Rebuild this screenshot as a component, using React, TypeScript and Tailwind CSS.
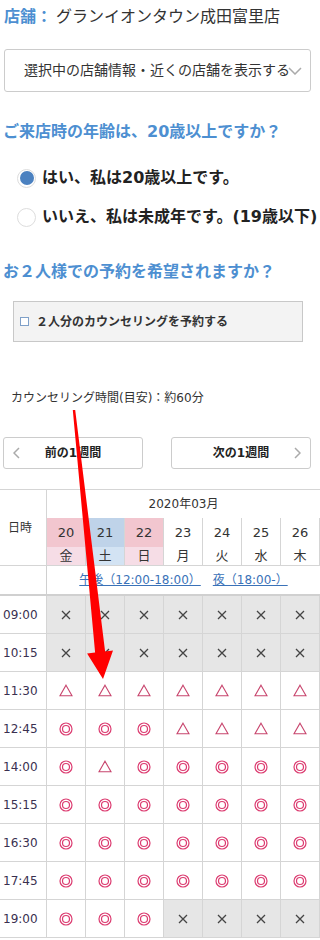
import * as React from "react";

const font = "font-['DejaVu_Sans','Noto_Sans_CJK_JP',sans-serif]";

type Mark = "o" | "t" | "x";

const days = [
  { n: "20", w: "金", top: "bg-[#f2c6cf]", bot: "bg-[#f6dde6]" },
  { n: "21", w: "土", top: "bg-[#bfd3e9]", bot: "bg-[#d3e3f3]" },
  { n: "22", w: "日", top: "bg-[#f2c6cf]", bot: "bg-[#f6dde6]" },
  { n: "23", w: "月", top: "bg-white", bot: "bg-white" },
  { n: "24", w: "火", top: "bg-white", bot: "bg-white" },
  { n: "25", w: "水", top: "bg-white", bot: "bg-white" },
  { n: "26", w: "木", top: "bg-white", bot: "bg-white" },
];

const slots: [string, string][] = [
  ["09:00", "xxxxxxx"],
  ["10:15", "xxxxxxx"],
  ["11:30", "ttttttt"],
  ["12:45", "ooottttt".slice(0, 7)],
  ["14:00", "otooooo"],
  ["15:15", "ooooooo"],
  ["16:30", "ooooooo"],
  ["17:45", "ooooooo"],
  ["19:00", "oooxxxx"],
];

const Symbol: React.FC<{ k: Mark }> = ({ k }) => {
  if (k === "o")
    return (
      <svg width="14" height="14" viewBox="0 0 14 14">
        <circle cx="7" cy="7" r="6" fill="none" stroke="#dc3b70" strokeWidth="1.2" />
        <circle cx="7" cy="7" r="3.5" fill="none" stroke="#dc3b70" strokeWidth="1.2" />
      </svg>
    );
  if (k === "t")
    return (
      <svg width="14" height="13" viewBox="0 0 14 13">
        <polygon points="7,1.2 13,11.8 1,11.8" fill="none" stroke="#c8466e" strokeWidth="1.1" />
      </svg>
    );
  return (
    <svg width="12" height="12" viewBox="0 0 12 12">
      <path d="M2 2 L10 10 M10 2 L2 10" stroke="#444" strokeWidth="1.3" />
    </svg>
  );
};

const App: React.FC = () => {
  return (
    <div className={`relative w-[320px] h-[940px] overflow-hidden bg-white text-[#333] ${font}`}>
      {/* Store name */}
      <div className="h-[34px] flex items-center pl-[4px] text-[16px] leading-[24px]">
        <span className="font-bold text-[#4d8fd1]">店舗：</span>
        <span className="ml-[4px]">グランイオンタウン成田富里店</span>
      </div>

      {/* Store info select */}
      <div className="mt-[15px] ml-[4px] w-[307px] h-[43px] border border-[#ccc] rounded-[3px] flex items-center pl-[19px] text-[14px]">
        <span>選択中の店舗情報・近くの店舗を表示する</span>
        <svg width="14" height="8" viewBox="0 0 14 8" className="-ml-[2px]">
          <polyline points="1,1 7,7 13,1" fill="none" stroke="#aaa" strokeWidth="1.5" />
        </svg>
      </div>

      {/* Age question */}
      <div className="mt-[28px] pl-[3px] text-[16px] leading-[24px] font-bold text-[#4d8fd1] whitespace-nowrap">
        ご来店時の年齢は、20歳以上ですか？
      </div>
      <div className="mt-[22px] h-[24px] flex items-center pl-[17px] whitespace-nowrap">
        <span className="w-[19px] h-[19px] rounded-full border border-[#ddd] flex items-center justify-center">
          <span className="w-[14px] h-[14px] rounded-full bg-[#4b81c0]" />
        </span>
        <span className="ml-[6px] text-[16px] font-bold text-[#222]">はい、私は20歳以上です。</span>
      </div>
      <div className="mt-[15px] h-[24px] flex items-center pl-[17px] whitespace-nowrap">
        <span className="w-[19px] h-[19px] rounded-full border border-[#ddd] bg-white shrink-0" />
        <span className="ml-[6px] text-[16px] font-bold text-[#222]">いいえ、私は未成年です。(19歳以下)</span>
      </div>

      {/* Pair booking */}
      <div className="mt-[31px] pl-[3px] text-[16px] leading-[24px] font-bold text-[#4d8fd1] whitespace-nowrap">
        お２人様での予約を希望されますか？
      </div>
      <div className="mt-[17px] ml-[13px] w-[290px] h-[41px] bg-[#f3f3f3] border border-[#c8c8c8] flex items-center pl-[6px]">
        <span className="w-[9px] h-[9px] border border-[#7fa0c8] bg-white" />
        <span className="ml-[7px] text-[12px] font-bold text-[#333]">２人分のカウンセリングを予約する</span>
      </div>

      <div className="mt-[47px] pl-[11px] text-[12px] leading-[18px] text-[#333]">
        カウンセリング時間(目安)：約60分
      </div>

      {/* Week navigation */}
      <div className="mt-[30px] flex justify-between px-[3px] pr-[9px]">
        <button className="relative w-[140px] h-[32px] border border-[#ccc] rounded-[3px] bg-white flex items-center justify-center text-[12px] font-bold text-[#222]">
          <svg width="7" height="12" viewBox="0 0 7 12" className="absolute left-[9px] top-[9px]">
            <polyline points="6,1 1,6 6,11" fill="none" stroke="#aaa" strokeWidth="1.5" />
          </svg>
          前の1週間
        </button>
        <button className="relative w-[140px] h-[32px] border border-[#ccc] rounded-[3px] bg-white flex items-center justify-center text-[12px] font-bold text-[#222]">
          次の1週間
          <svg width="7" height="12" viewBox="0 0 7 12" className="absolute right-[9px] top-[9px]">
            <polyline points="1,1 6,6 1,11" fill="none" stroke="#aaa" strokeWidth="1.5" />
          </svg>
        </button>
      </div>

      {/* Calendar */}
      <div className="mt-[20px] grid grid-cols-[47px_repeat(7,39px)] border-t border-[#d5d5d5] text-[12px]">
        <div className="row-span-3 border-r border-b border-[#d5d5d5] flex items-center justify-center pr-[6px]">日時</div>
        <div className="col-span-7 h-[28px] flex items-center justify-center">2020年03月</div>
        {days.map((d) => (
          <div key={d.n} className={`h-[29px] border-r border-[#d5d5d5] flex items-center justify-center text-[13px] ${d.top}`}>
            {d.n}
          </div>
        ))}
        {days.map((d) => (
          <div key={d.w} className={`h-[19px] border-r border-b border-[#d5d5d5] flex items-center justify-center text-[13px] ${d.bot}`}>
            {d.w}
          </div>
        ))}
        <div className="h-[30px] border-r border-b-2 border-[#d0d0d0]" />
        <div className="col-span-7 h-[30px] border-b-2 border-[#d0d0d0] flex items-center justify-center gap-[12px] text-[#3a72b8]">
          <span className="underline">午後（12:00-18:00）</span>
          <span className="underline">夜（18:00-）</span>
        </div>

        {slots.map(([time, marks]) => (
          <React.Fragment key={time}>
            <div className="h-[38px] border-r border-b border-[#d5d5d5] flex items-center pl-[3px] text-[#3a3050]">{time}</div>
            {marks.split("").map((m, i) => (
              <div
                key={i}
                className={`h-[38px] border-r border-b border-[#d5d5d5] flex items-center justify-center ${m === "x" ? "bg-[#e6e6e6]" : "bg-white"}`}
              >
                <Symbol k={m as Mark} />
              </div>
            ))}
          </React.Fragment>
        ))}
      </div>

      {/* Red annotation arrow */}
      <svg className="absolute left-0 top-0 pointer-events-none" width="320" height="940" viewBox="0 0 320 940">
        <polygon
          points="72.8,410 75.2,410 105.1,651.5 113,650.6 103,679 87.1,653.4 95.1,652.5"
          fill="#ff0000"
        />
      </svg>
    </div>
  );
};

export default App;
